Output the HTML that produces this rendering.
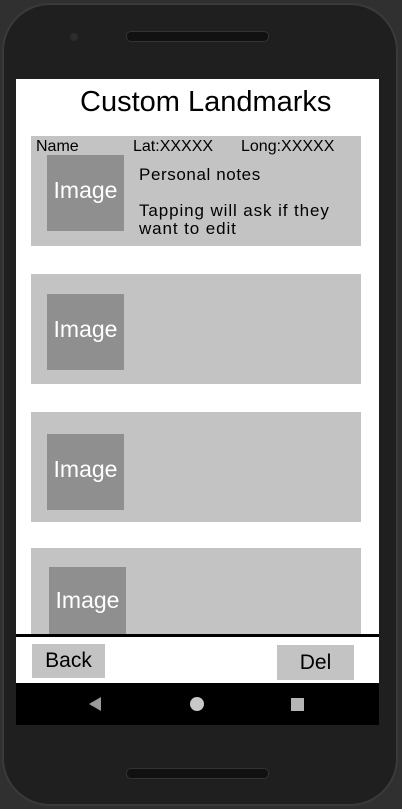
<!DOCTYPE html>
<html><head><style>
*{margin:0;padding:0;box-sizing:border-box}
body{width:402px;height:809px;background:#303030;position:relative;overflow:hidden;font-family:"Liberation Sans",sans-serif}
.phone{position:absolute;left:2px;top:3px;width:396px;height:803px;background:#1f1f1f;border-radius:48px;border:2px solid #3a3a3a}
.spk{position:absolute;background:#111;border-radius:5px;border:1px solid #333}
.screen{position:absolute;left:16px;top:79px;width:363px;height:604px;background:#fff;overflow:hidden}
.abs{position:absolute}
.card{position:absolute;left:15px;width:330px;height:110px;background:#c3c3c3}
.img{position:absolute;background:#8f8f8f;color:#fff;font-size:23px;display:flex;align-items:center;justify-content:center;width:77px;height:76px;padding-bottom:5px}
.t{position:absolute;font-size:16px;color:#000;white-space:nowrap}
.nav{position:absolute;left:16px;top:683px;width:363px;height:42px;background:#000}
</style></head><body>
<div class="phone"></div>
<div class="spk" style="left:126px;top:31px;width:143px;height:11px"></div>
<div class="abs" style="left:70px;top:33px;width:8px;height:8px;border-radius:50%;background:#2c2c2c"></div>
<div class="spk" style="left:126px;top:768px;width:143px;height:11px"></div>
<div class="screen">
 <div class="t" style="left:64px;top:7px;font-size:29px">Custom Landmarks</div>
 <div class="card" style="top:57px">
  <div class="img" style="left:16px;top:19px">Image</div>
  <div class="t" style="left:5px;top:2px">Name</div>
  <div class="t" style="left:102px;top:2px">Lat:XXXXX</div>
  <div class="t" style="left:210px;top:2px">Long:XXXXX</div>
  <div class="t" style="left:108px;top:29px;font-size:17px;letter-spacing:0.6px">Personal notes</div>
  <div class="t" style="left:108px;top:66px;line-height:18px;font-size:17px;letter-spacing:0.9px">Tapping will ask if they<br>want to edit</div>
 </div>
 <div class="card" style="top:195px"><div class="img" style="left:16px;top:20px">Image</div></div>
 <div class="card" style="top:333px"><div class="img" style="left:16px;top:22px">Image</div></div>
 <div class="card" style="top:469px"><div class="img" style="left:18px;top:19px;height:80px;padding-bottom:14px">Image</div></div>
 <div class="abs" style="left:0;top:555px;width:363px;height:49px;background:#fff"></div>
 <div class="abs" style="left:-2px;top:555px;width:367px;height:3px;background:#000"></div>
 <div class="abs" style="left:16px;top:565px;width:73px;height:34px;background:#c3c3c3;font-size:21px;display:flex;align-items:center;justify-content:center">Back</div>
 <div class="abs" style="left:261px;top:566px;width:77px;height:35px;background:#c3c3c3;font-size:21px;display:flex;align-items:center;justify-content:center">Del</div>
</div>
<div class="nav">
 <div class="abs" style="left:73px;top:14px;width:0;height:0;border-top:7px solid transparent;border-bottom:7px solid transparent;border-right:12px solid #9a9a9a"></div>
 <div class="abs" style="left:174px;top:14px;width:14px;height:14px;border-radius:50%;background:#c8c8c8"></div>
 <div class="abs" style="left:275px;top:15px;width:13px;height:13px;background:#b5b5b5"></div>
</div>
</body></html>
